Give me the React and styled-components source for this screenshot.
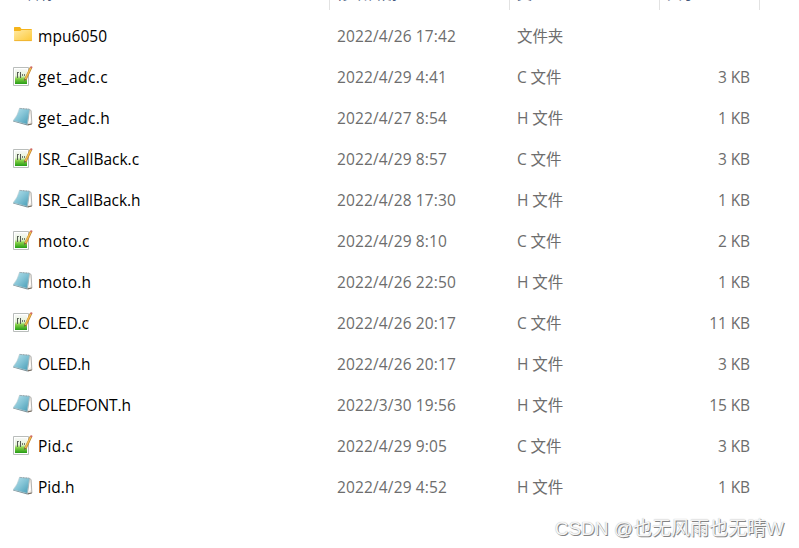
import React from "react";
import styled, { createGlobalStyle } from "styled-components";

const GlobalStyle = createGlobalStyle`
  body {
    margin: 0;
    background: #fff;
    overflow: hidden;
  }
`;

const Page = styled.main`
  position: relative;
  width: 799px;
  height: 548px;
  overflow: hidden;
  background: #fff;
  font-family: "Open Sans", "Noto Sans CJK SC", sans-serif;
`;

const Header = styled.header`
  display: grid;
  grid-template-columns: 330px 180px 150px 100px;
  height: 10px;
  margin-bottom: 5px;
  overflow: hidden;
`;

const HeaderCell = styled.div`
  display: flex;
  align-items: flex-end;
  box-sizing: border-box;
  height: 10px;
  padding-left: ${(p) => p.$indent}px;
  border-right: 1px solid #e2e2e2;
  color: #43587c;
  font: 15px/20px "Noto Sans CJK SC", sans-serif;

  span {
    margin-bottom: 7px;
  }
`;

const Row = styled.div`
  display: grid;
  grid-template-columns: 25px 299px 180px 140px 93px;
  align-items: center;
  height: 41px;
  padding-left: 13px;
  font-size: 15.5px;
  line-height: 20px;
  white-space: nowrap;
`;

const IconBox = styled.span`
  display: flex;
  width: 20px;
  height: 24px;
  margin-bottom: 1px;

  svg {
    display: block;
  }
`;

const Name = styled.span`
  color: #000;
  letter-spacing: ${(p) => p.$tracking}px;
`;

const Meta = styled.span`
  color: #6d6d6d;
`;

const DateText = styled(Meta)`
  letter-spacing: 0.14px;
`;

const TypeText = styled(Meta)`
  letter-spacing: -0.1px;
`;

const Size = styled(Meta)`
  text-align: right;
  letter-spacing: -0.1px;
`;

const Watermark = styled.div`
  position: absolute;
  right: 15px;
  bottom: 6px;
  color: #f6f6f6;
  font: 19px/26px "Liberation Sans", "Noto Sans CJK SC", sans-serif;
  white-space: nowrap;
  text-shadow: 1px 1px 0 #858585, 0 0 1px #aaa;
`;

function Gradients() {
  return (
    <svg width="0" height="0" style={{ position: "absolute" }} aria-hidden="true">
      <defs>
        <linearGradient id="folder" x1="0" y1="0" x2="1" y2="1">
          <stop offset="0" stopColor="#ffe9a3" />
          <stop offset="1" stopColor="#fdc937" />
        </linearGradient>
        <linearGradient id="code" x1="0" y1="0" x2="0" y2="1">
          <stop offset="0" stopColor="#f7f8f6" />
          <stop offset=".45" stopColor="#e5f3d7" />
          <stop offset=".65" stopColor="#83cf45" />
          <stop offset="1" stopColor="#259c16" />
        </linearGradient>
        <linearGradient id="note" x1="0" y1="0" x2="1" y2="1">
          <stop offset="0" stopColor="#b9e4ee" />
          <stop offset=".5" stopColor="#83c3d5" />
          <stop offset="1" stopColor="#459bb5" />
        </linearGradient>
      </defs>
    </svg>
  );
}

function FolderIcon() {
  return (
    <svg width="20" height="24" viewBox="0 0 20 24">
      <path d="M1 4.5q0-.5.7-.5H7l1.5 2H18q1 0 1 1v3H1z" fill="#f5b41b" />
      <path d="M1 8h6.2L8.5 7H19v10.3q0 .7-.7.7H1.7q-.7 0-.7-.7z" fill="url(#folder)" />
      <path d="M1.3 17.6h17.4" stroke="#eeb02d" strokeWidth=".9" />
    </svg>
  );
}

function CodeIcon() {
  return (
    <svg width="20" height="24" viewBox="0 0 20 24">
      <path d="M.5 3.5h15V21.5H.5z" fill="#fff" stroke="#b9bdbb" />
      <path d="M2 5h12v15H2z" fill="url(#code)" />
      <path d="M4.5 8v6M7.5 8v6" stroke="#555c54" strokeWidth="1" />
      <path d="M4.5 8.5h1.5" stroke="#555c54" strokeWidth=".8" />
      <path d="M9 11h1M11 11h1" stroke="#4b5348" strokeWidth="1.3" />
      <path d="M18 3.4 12.3 15.8" stroke="#bd8431" strokeWidth="2.5" />
      <path d="M17.8 3.8 12.4 15" stroke="#f3bd50" strokeWidth="1.4" />
      <path d="m17 3.6.9-1.6 1.8.9-.9 1.7z" fill="#cf6b66" />
      <path d="m11.2 14.6 1.9 1-1.9 1.6z" fill="#6d6347" />
    </svg>
  );
}

function NoteIcon() {
  return (
    <svg width="20" height="24" viewBox="0 0 20 24">
      <path d="m16.3 4.3 1.8 1.2.8 13.5-4.3 1z" fill="#eee9e2" stroke="#979897" strokeWidth=".7" />
      <path d="m17 8 .9 8-2.7 2.5z" fill="#fff" />
      <path d="m14.8 19.2 3.9-.8v1l-4.1 1.1z" fill="#756a5e" />
      <path d="M.2 15.7 14.3 19.3v1.2L.2 16.6z" fill="#788d94" />
      <path d="M6.5 3.4 16.4 4.2 14.2 19.2.2 15.7Q4.8 10.5 6.5 3.4z" fill="url(#note)" stroke="#9ebbc3" strokeWidth=".5" />
      <path d="M6.8 3.4 16.4 4.2" stroke="#8a969b" strokeWidth="1" strokeDasharray=".8 .8" />
    </svg>
  );
}

const icons = { folder: FolderIcon, c: CodeIcon, h: NoteIcon };
const types = { folder: "文件夹", c: "C 文件", h: "H 文件" };

const files = [
  { name: "mpu6050", kind: "folder", date: "2022/4/26 17:42", size: "", tracking: 0.05 },
  { name: "get_adc.c", kind: "c", date: "2022/4/29 4:41", size: "3 KB", tracking: 0.4 },
  { name: "get_adc.h", kind: "h", date: "2022/4/27 8:54", size: "1 KB", tracking: 0.4 },
  { name: "ISR_CallBack.c", kind: "c", date: "2022/4/29 8:57", size: "3 KB", tracking: 0 },
  { name: "ISR_CallBack.h", kind: "h", date: "2022/4/28 17:30", size: "1 KB", tracking: -0.05 },
  { name: "moto.c", kind: "c", date: "2022/4/29 8:10", size: "2 KB", tracking: 0.3 },
  { name: "moto.h", kind: "h", date: "2022/4/26 22:50", size: "1 KB", tracking: 0.2 },
  { name: "OLED.c", kind: "c", date: "2022/4/26 20:17", size: "11 KB", tracking: -0.1 },
  { name: "OLED.h", kind: "h", date: "2022/4/26 20:17", size: "3 KB", tracking: -0.2 },
  { name: "OLEDFONT.h", kind: "h", date: "2022/3/30 19:56", size: "15 KB", tracking: -0.1 },
  { name: "Pid.c", kind: "c", date: "2022/4/29 9:05", size: "3 KB", tracking: 0.2 },
  { name: "Pid.h", kind: "h", date: "2022/4/29 4:52", size: "1 KB", tracking: 0.05 },
];

function FileRow({ name, kind, date, size, tracking }) {
  const Icon = icons[kind];
  return (
    <Row>
      <IconBox><Icon /></IconBox>
      <Name $tracking={tracking}>{name}</Name>
      <DateText>{date}</DateText>
      <TypeText>{types[kind]}</TypeText>
      <Size>{size}</Size>
    </Row>
  );
}

export default function App() {
  return (
    <Page>
      <GlobalStyle />
      <Gradients />
      <Header>
        <HeaderCell $indent={25}><span>名称</span></HeaderCell>
        <HeaderCell $indent={7}><span>修改日期</span></HeaderCell>
        <HeaderCell $indent={7}><span>类型</span></HeaderCell>
        <HeaderCell $indent={7}><span>大小</span></HeaderCell>
      </Header>
      {files.map((file) => (
        <FileRow key={file.name} {...file} />
      ))}
      <Watermark>CSDN @也无风雨也无晴W</Watermark>
    </Page>
  );
}
